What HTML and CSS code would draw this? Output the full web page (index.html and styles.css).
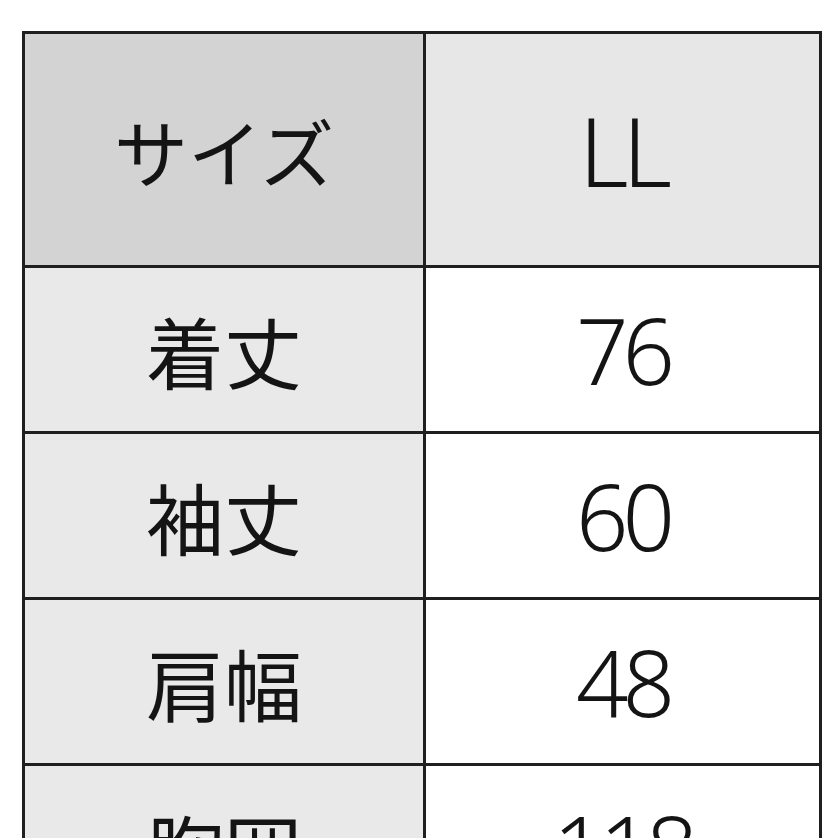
FILE: index.html
```html
<!DOCTYPE html>
<html lang="ja">
<head>
<meta charset="utf-8">
<title>サイズ表</title>
<link rel="stylesheet" href="styles.css">
</head>
<body>
<table class="size-table">
  <tr class="row-head">
    <th class="label head-label">サイズ</th>
    <td class="value head-value">LL</td>
  </tr>
  <tr class="row">
    <th class="label">着丈</th>
    <td class="value">76</td>
  </tr>
  <tr class="row">
    <th class="label">袖丈</th>
    <td class="value">60</td>
  </tr>
  <tr class="row">
    <th class="label">肩幅</th>
    <td class="value">48</td>
  </tr>
  <tr class="row">
    <th class="label">胸囲</th>
    <td class="value">118</td>
  </tr>
</table>
</body>
</html>
```
FILE: styles.css
```css
html, body {
  margin: 0;
  padding: 0;
  background: #ffffff;
  overflow: hidden;
  height: 838px;
}
body {
  padding: 31px 0 0 22px;
  font-family: "Noto Sans CJK JP", "Noto Sans", sans-serif;
  color: #141414;
}
.size-table {
  border-collapse: collapse;
  width: 800px;
  table-layout: fixed;
}
.size-table th,
.size-table td {
  border: 3px solid #1f1f1f;
  padding: 0;
  text-align: center;
  vertical-align: middle;
}
.label {
  width: 398px;
  font-weight: 400;
  font-size: 78px;
  background: #e9e9e9;
}
.value {
  background: #ffffff;
  font-family: "Noto Sans", "Open Sans", sans-serif;
  font-weight: 300;
  font-size: 92px;
  letter-spacing: -6px;
}
.row-head {
  height: 234px;
}
.row {
  height: 166px;
}
.head-label {
  background: #d3d3d3;
  font-size: 74px;
}
.head-value {
  background: #e7e7e7;
  font-size: 96px;
}
```
